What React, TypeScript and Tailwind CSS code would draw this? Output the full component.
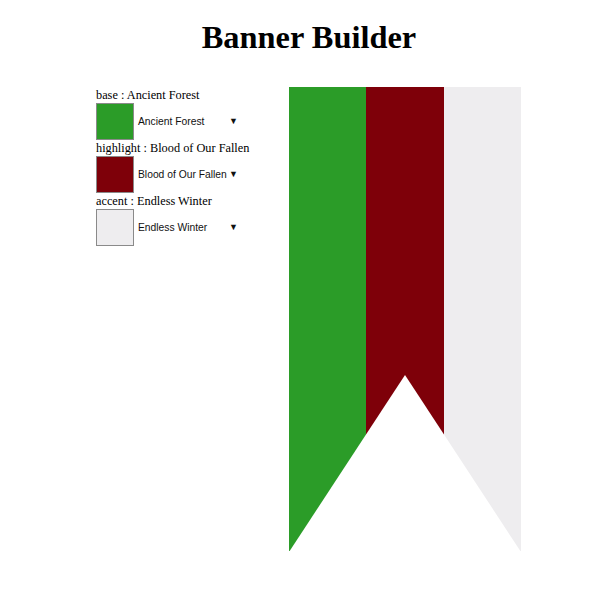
import React from "react";

const rows = [
  { key: "base", name: "Ancient Forest", color: "#2b9c28" },
  { key: "highlight", name: "Blood of Our Fallen", color: "#7e0009" },
  { key: "accent", name: "Endless Winter", color: "#eeedef" },
];

function Banner() {
  return (
    <svg width="232" height="464" viewBox="0 0 232 464" className="block">
      <rect x="0" y="0" width="77" height="464" fill="#2b9c28" />
      <rect x="77" y="0" width="78" height="464" fill="#7e0009" />
      <rect x="155" y="0" width="77" height="464" fill="#eeedef" />
      <polygon points="0,465 116,288 232,465" fill="#ffffff" />
    </svg>
  );
}

export default function App() {
  return (
    <div className="w-[600px] h-[600px] bg-white text-black" style={{ fontFamily: '"Liberation Serif", serif' }}>
      <h1 className="text-center font-bold text-[32.4px] leading-[36px] pt-[19px] pl-[18px]">Banner Builder</h1>
      <div className="flex mt-[32px]">
        <div className="ml-[96px] w-[193px] flex flex-col">
          {rows.map((r) => (
            <div key={r.key} className="flex flex-col">
              <div className="text-[12.3px] leading-[16px] h-[16px] whitespace-nowrap">
                {r.key} : {r.name}
              </div>
              <div className="flex items-center h-[37px]">
                <div
                  className="w-[38px] h-[37px] border border-[#8a8a8a]"
                  style={{ backgroundColor: r.color }}
                />
                <div
                  className="flex items-center pl-[4px] text-[10.3px] whitespace-nowrap text-[#111]"
                  style={{ fontFamily: '"Liberation Sans", Arial, sans-serif' }}
                >
                  <span className="w-[91px]">{r.name}</span>
                  <span className="text-[9px]">▼</span>
                </div>
              </div>
            </div>
          ))}
        </div>
        <div className="mt-0">
          <Banner />
        </div>
      </div>
    </div>
  );
}
